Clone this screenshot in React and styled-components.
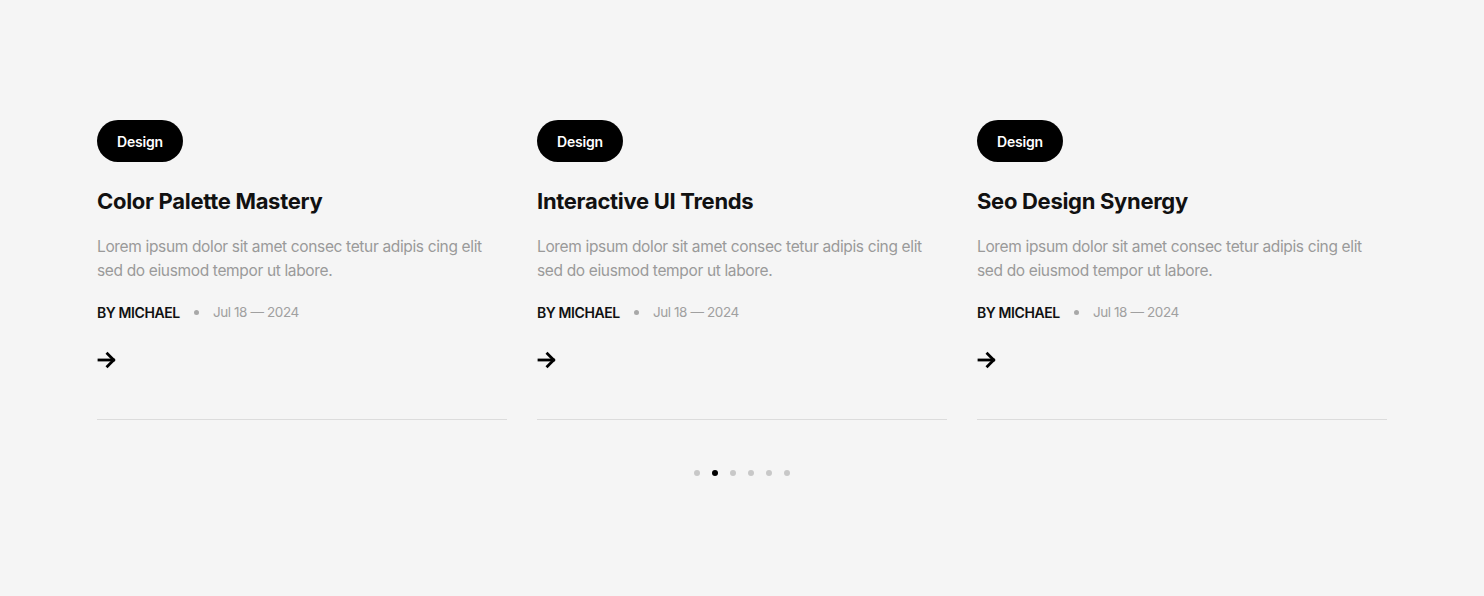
import React from 'react';
import styled, { createGlobalStyle } from 'styled-components';

const Global = createGlobalStyle`
  html, body { margin: 0; padding: 0; background: #f5f5f5; }
  body { font-family: Inter, "Noto Sans", "Liberation Sans", sans-serif; -webkit-font-smoothing: antialiased; }
  * { box-sizing: border-box; }
`;

const Section = styled.section`
  min-height: 596px;
  padding-top: 120px;
  display: flex;
  flex-direction: column;
  align-items: center;
`;

const Track = styled.div`
  width: 1290px;
  display: grid;
  grid-template-columns: repeat(3, 1fr);
  gap: 30px;
`;

const Card = styled.article`
  display: flex;
  flex-direction: column;
  align-items: flex-start;
  padding-bottom: 49px;
  border-bottom: 1px solid #dcdcdc;
`;

const Badge = styled.span`
  height: 42px;
  padding: 0 20px;
  display: inline-flex;
  align-items: center;
  border-radius: 21px;
  background: #000;
  color: #fff;
  font-size: 14px;
  font-weight: 600;
  letter-spacing: -0.2px;
`;

const Title = styled.h3`
  margin: 24px 0 0;
  font-size: 22px;
  line-height: 30px;
  font-weight: 700;
  color: #111;
  letter-spacing: -0.3px;
`;

const Text = styled.p`
  margin: 19px 0 0;
  font-size: 15.5px;
  line-height: 24px;
  color: #9a9a9a;
  letter-spacing: -0.35px;
`;

const Meta = styled.div`
  margin-top: 19px;
  height: 20px;
  display: flex;
  align-items: center;
  gap: 14px;
  font-size: 14px;
`;

const Author = styled.span`
  font-weight: 600;
  color: #111;
  letter-spacing: -0.4px;
`;

const Dot = styled.span`
  width: 5px;
  height: 5px;
  border-radius: 50%;
  background: #a8a8a8;
`;

const Date = styled.span`
  color: #a0a0a0;
  font-size: 13.5px;
  letter-spacing: -0.4px;
`;

const ArrowLink = styled.a`
  margin-top: 28px;
  display: flex;
  width: 20px;
  height: 20px;
  color: #000;
`;

const Dots = styled.div`
  margin-top: 50px;
  display: flex;
  gap: 12px;
`;

const Pager = styled.span`
  width: 6px;
  height: 6px;
  border-radius: 50%;
  background: ${p => (p.$active ? '#000' : '#c8c8c8')};
`;

const posts = [
  { title: 'Color Palette Mastery' },
  { title: 'Interactive UI Trends' },
  { title: 'Seo Design Synergy' },
];

export default function App() {
  return (
    <>
      <Global />
      <Section>
        <Track>
          {posts.map(p => (
            <Card key={p.title}>
              <Badge>Design</Badge>
              <Title>{p.title}</Title>
              <Text>
                Lorem ipsum dolor sit amet consec tetur adipis cing elit sed do eiusmod tempor ut labore.
              </Text>
              <Meta>
                <Author>BY MICHAEL</Author>
                <Dot />
                <Date>Jul 18 — 2024</Date>
              </Meta>
              <ArrowLink href="#">
                <svg width="20" height="20" viewBox="0 0 20 20" fill="none" stroke="currentColor" strokeWidth="2.8" strokeLinecap="square">
                  <path d="M2 10h14.5" />
                  <path d="M10.5 3.8L16.7 10l-6.2 6.2" />
                </svg>
              </ArrowLink>
            </Card>
          ))}
        </Track>
        <Dots>
          {[0, 1, 2, 3, 4, 5].map(i => (
            <Pager key={i} $active={i === 1} />
          ))}
        </Dots>
      </Section>
    </>
  );
}
